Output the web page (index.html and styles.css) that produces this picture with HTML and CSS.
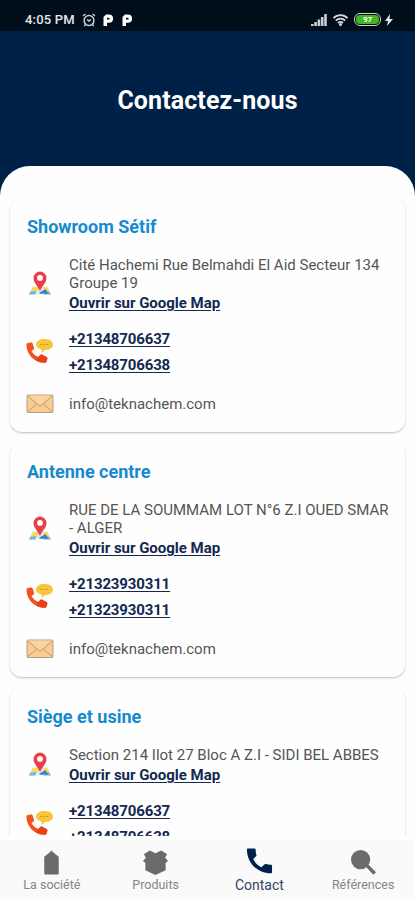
FILE: index.html
```html
<!DOCTYPE html>
<html lang="fr">
<head>
<meta charset="utf-8">
<title>Contactez-nous</title>
<link rel="stylesheet" href="styles.css">
</head>
<body>
<svg class="defs" width="0" height="0">
  <symbol id="pin" viewBox="0 0 26 26">
    <path fill="#e9eee4" d="M5 16h16l4 9H1z"/>
    <path fill="#f8d954" d="M5 17h7l-2 5-8 1zM16 17h5l3 6-6-1z"/>
    <path fill="#68b8ea" d="M2.500 22l6.500-1-1 4H1zM18 21l5 1 2 3h-8z"/>
    <path fill="#3584cc" d="M12 23l7-4 3 5h-9z"/>
    <path fill="#e8404b" d="M13 0a7 7 0 0 1 7 7c0 5-4 8-7 14-3-6-7-9-7-14a7 7 0 0 1 7-7z"/>
    <circle cx="13" cy="7" r="3.100" fill="#fff"/>
  </symbol>
  <symbol id="call" viewBox="0 0 28 26">
    <path fill="#f8c63c" d="M18.500 1C23.500 1 27 3 27 6.500S23.500 12 19 12l-3 3-.5-3.500C12 11 10 9 10 6.500 10 3 13.500 1 18.500 1z"/>
    <path stroke="#b98f2c" stroke-width="1.200" stroke-dasharray="1.500 1.500" d="M14.500 6.500h8"/>
    <path fill="#f4511e" d="M2 5l3-.5c1 0 1.500.5 1.700 1.200l1.300 4.300c.2 1-.2 1.500-1 2L5.500 13c1.500 3 4 5 7 6l1.700-2c.6-.6 1.300-.7 2-.3l4.300 2.300c.8.500 1 1 .8 2l-.8 2.500c-.3.900-1 1.300-2 1.300C9 25 1 17 .5 8 .4 6 .8 5.300 2 5z"/>
    <path fill="#e64016" d="M12.500 19l1.700-2c.6-.6 1.300-.7 2-.3l4.300 2.300c.8.500 1 1 .8 2l-.8 2.500c-.3.900-1 1.300-2 1.300-3 0-6-1-8.500-2.700z"/>
  </symbol>
  <symbol id="mail" viewBox="0 0 28 20">
    <rect x="1" y="1" width="26" height="17.500" rx="1" fill="#f9cc91" stroke="#b79c88"/>
    <path fill="none" stroke="#c39a7c" d="M1.500 18l9-8M26.500 18l-9-8"/>
    <path fill="#fbd39e" stroke="#bd9274" d="M1.500 1.500l10.800 9.800c1 .9 2.400.9 3.400 0l10.800-9.800"/>
  </symbol>
</svg>
<div class="screen">
  <div class="status">
    <div class="status-left">
      <span>4:05 PM</span>
      <svg class="alarm" viewBox="0 0 14 14"><circle cx="7" cy="7.500" r="4.900"/><path d="M1 3l2.500-2M13 3l-2.500-2M3.500 11.500L2.300 13M10.500 11.500l1.200 1.500M5 6.500l2 1.500 2-1.500"/></svg>
      <svg class="pay" viewBox="0 0 10 12"><path fill-rule="evenodd" d="M.5 3L3 .5h3a4 4 0 0 1 0 8.200H4V12H.5zM4 3.800v1.800h1.700a.9.900 0 0 0 0-1.800z"/></svg>
      <svg class="pay" viewBox="0 0 10 12"><path fill-rule="evenodd" d="M.5 3L3 .5h3a4 4 0 0 1 0 8.200H4V12H.5zM4 3.800v1.800h1.700a.9.900 0 0 0 0-1.800z"/></svg>
    </div>
    <div class="status-right">
      <svg class="signal" viewBox="0 0 16 12"><path d="M0 10h2.600v2H0zM3.300 8h2.600v4H3.300zM6.600 5.500h2.600V12H6.600zM9.900 3h2.600v9H9.900zM13.200 0h2.600v12h-2.600z"/></svg>
      <svg class="wifi" viewBox="0 0 16 12"><path d="M1 4.200c4-4 10-4 14 0M3.300 6.700c2.700-2.700 6.700-2.700 9.400 0M5.500 9c1.500-1.300 3.500-1.300 5 0"/><circle cx="8" cy="10.500" r="1.500"/></svg>
      <span class="battery"><span>97</span></span>
      <svg class="bolt" viewBox="0 0 8 12"><path d="M5 0L0 7h3l-1 5 6-7H4.500z"/></svg>
    </div>
  </div>
  <header class="hero"><h1>Contactez-nous</h1></header>
  <main class="sheet">
    <div class="list">
    <section class="card">
      <h2>Showroom Sétif</h2>
      <div class="row address"><svg class="pin"><use href="#pin"/></svg><div><p>Cité Hachemi Rue Belmahdi El Aid Secteur 134<br>Groupe 19</p><a class="map">Ouvrir sur Google Map</a></div></div>
      <div class="row phones"><svg class="call"><use href="#call"/></svg><div><a>+21348706637</a><a>+21348706638</a></div></div>
      <div class="row email"><svg class="mail"><use href="#mail"/></svg><p>info@teknachem.com</p></div>
    </section>
    <section class="card">
      <h2>Antenne centre</h2>
      <div class="row address"><svg class="pin"><use href="#pin"/></svg><div><p>RUE DE LA SOUMMAM LOT N°6 Z.I OUED SMAR<br>- ALGER</p><a class="map">Ouvrir sur Google Map</a></div></div>
      <div class="row phones"><svg class="call"><use href="#call"/></svg><div><a>+21323930311</a><a>+21323930311</a></div></div>
      <div class="row email"><svg class="mail"><use href="#mail"/></svg><p>info@teknachem.com</p></div>
    </section>
    <section class="card">
      <h2>Siège et usine</h2>
      <div class="row address"><svg class="pin"><use href="#pin"/></svg><div><p>Section 214 Ilot 27 Bloc A Z.I - SIDI BEL ABBES</p><a class="map">Ouvrir sur Google Map</a></div></div>
      <div class="row phones"><svg class="call"><use href="#call"/></svg><div><a>+21348706637</a><a>+21348706638</a></div></div>
    </section>
    </div>
  </main>
  <nav class="tabs">
    <a class="tab"><svg viewBox="0 0 28 28"><path d="M14 1.500l2 2 5.500 4.500v17.500a1 1 0 0 1-1 1h-13a1 1 0 0 1-1-1V8L12 3.500z"/></svg><span>La société</span></a>
    <a class="tab"><svg viewBox="0 0 28 28"><path d="M8 1.500L14 4.500l6-3L26 5.500l-2 3.500 3 3.500-2.500 2v7.500L14 27 3.500 22v-7.500L1 12.500 4 9 2 5.500z"/></svg><span>Produits</span></a>
    <a class="tab active"><svg viewBox="0 0 28 28"><path d="M2 1h6.500C9.500 1 10 1.500 10 2.500c0 2 .3 3.500.8 5 .2.600.1 1.100-.4 1.600L7.500 12c2 4 4.700 6.600 8.500 8.500l3-3c.4-.4 1-.6 1.600-.4 1.600.5 3.200.8 5 .8 1 0 1.400.5 1.400 1.500v6c0 1-.5 1.400-1.400 1.400C12 26.800 1 16 1 2.300 1 1.500 1.300 1 2 1z"/></svg><span>Contact</span></a>
    <a class="tab"><svg viewBox="0 0 28 28"><circle cx="11" cy="11" r="10"/><path d="M16 18l2.500-2.500 8.500 8.500-2.800 2.800z"/></svg><span>Références</span></a>
  </nav>
</div>
</body>
</html>
```
FILE: styles.css
```css
* { box-sizing: border-box; }
body { margin: 0; font-family: Roboto, "Liberation Sans", sans-serif; }
h1, h2, p { margin: 0; }
svg { display: block; flex: none; }
.defs { position: absolute; }
.screen { width: 415px; height: 900px; overflow: hidden; display: flex; flex-direction: column; background: #002147; }
.status { height: 31px; flex: none; display: flex; justify-content: space-between; align-items: center; padding: 8px 22px 0 25px; background: #000d1b; color: #e4e8ec; }
.status-left, .status-right { display: flex; align-items: center; }
.status-left { font-size: 13px; font-weight: 500; letter-spacing: .2px; }
.alarm { width: 14px; height: 14px; margin-left: 7px; fill: none; stroke: #c9d0d8; stroke-width: 1.500; }
.pay { width: 10px; height: 12px; margin-left: 7px; fill: #fff; }
.pay + .pay { margin-left: 9px; }
.signal { width: 16px; height: 12px; fill: #c9ced2; }
.wifi { width: 17px; height: 12px; margin-left: 5px; fill: #d5dade; }
.wifi path { fill: none; stroke: #d5dade; stroke-width: 1.800; }
.battery { width: 27px; height: 13px; margin-left: 5px; padding: 1px; border: 1px solid #cbd3cc; border-radius: 6px; }
.battery span { display: block; height: 9px; border-radius: 4px; background: #43b51f; color: #fff; font-size: 8px; line-height: 9px; font-weight: 700; text-align: center; }
.bolt { width: 8px; height: 12px; margin-left: 4px; fill: #e4e8ec; }
.hero { height: 135px; flex: none; display: flex; align-items: center; justify-content: center; padding-top: 4px; color: #fff; }
.hero h1 { font-size: 25px; line-height: 30px; font-weight: 700; letter-spacing: .1px; }
.sheet { flex: 1; min-height: 0; padding-bottom: 4px; border-radius: 30px 30px 0 0; background: #fefefe; }
.list { height: 100%; overflow: hidden; padding: 32px 10px 0; }
.card { padding: 17px 16px 18px 17px; margin-bottom: 11px; border-radius: 12px; background: #fefefe; box-shadow: 0 1px 2px rgba(0,0,0,.25); }
.card h2 { color: #168ace; font-size: 18px; line-height: 24px; font-weight: 700; }
.row { display: flex; align-items: center; color: #555; font-size: 15px; line-height: 18px; white-space: nowrap; }
.row a { display: block; width: fit-content; color: #142850; font-weight: 700; text-decoration: underline; text-decoration-thickness: 1px; text-underline-offset: 2px; }
.address { margin-top: 17px; }
.row .map { margin-top: 1px; line-height: 20px; letter-spacing: -.02px; }
.phones { margin-top: 13px; }
.phones a { line-height: 26px; letter-spacing: -.15px; }
.email { margin-top: 16px; line-height: 20px; }
.pin { width: 24px; height: 25px; margin: -2px 17px 0 1px; }
.call { width: 28px; height: 26px; margin: -2px 15px 0 -1px; }
.mail { width: 28px; height: 20px; margin: -1px 15px 0 -1px; }
.tabs { height: 60px; flex: none; display: grid; grid-template-columns: repeat(4, 1fr); background: #fafafa; }
.tab { display: flex; flex-direction: column; align-items: center; padding-top: 9px; color: #858585; font-size: 12.500px; line-height: 18px; }
.tab svg { width: 27px; height: 27px; fill: #6b6b6b; }
.tab.active { padding-top: 7px; color: #334564; font-size: 14px; }
.tab.active svg { height: 28px; margin-bottom: 1px; fill: #00204a; }
```
